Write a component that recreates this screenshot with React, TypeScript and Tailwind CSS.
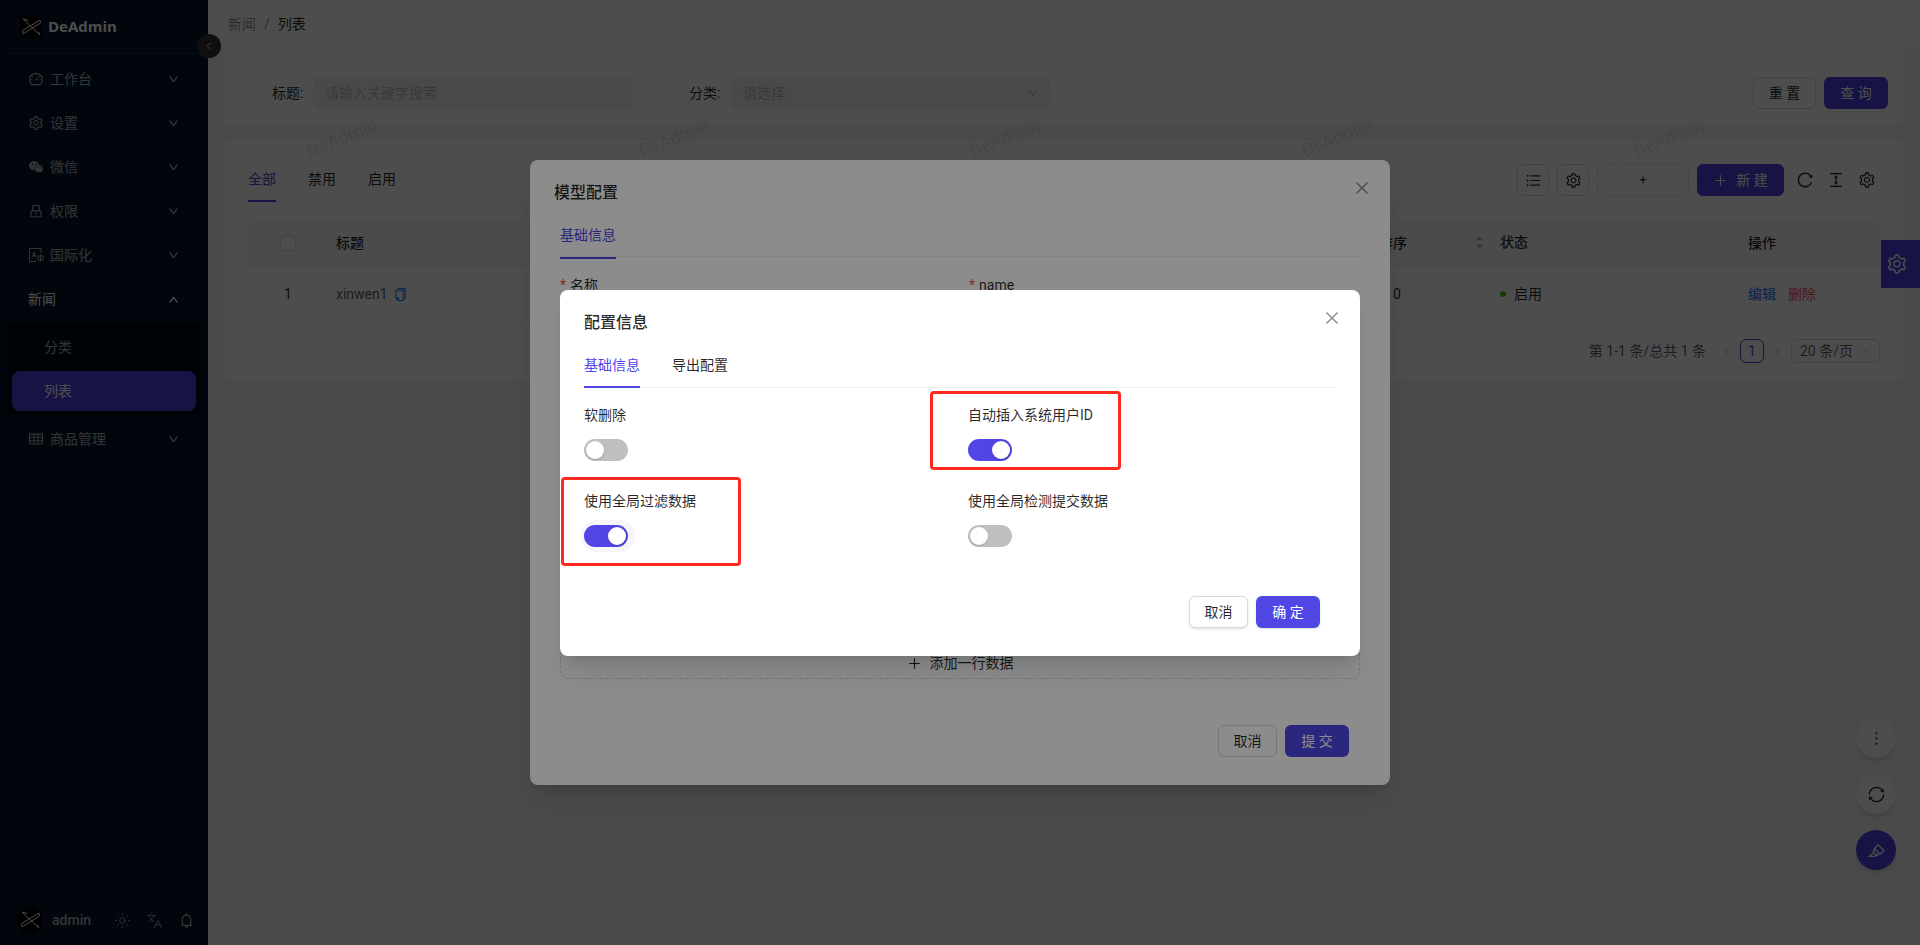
import React from "react";
import {
  AiOutlineDashboard,
  AiOutlineSetting,
  AiFillWechat,
  AiOutlineLock,
  AiOutlineTable,
  AiOutlineDown,
  AiOutlineUp,
  AiOutlineLeft,
  AiOutlineRight,
  AiOutlineClose,
  AiOutlinePlus,
  AiOutlineUnorderedList,
  AiOutlineReload,
  AiOutlineColumnHeight,
  AiOutlineCopy,
  AiOutlineMore,
  AiOutlineSync,
  AiOutlineHighlight,
  AiOutlineBell,
  AiFillCaretUp,
  AiFillCaretDown,
} from "react-icons/ai";
import { Sun, Languages } from "lucide-react";

const I18nIcon = () => (
  <svg width="16" height="16" viewBox="0 0 16 16" fill="none" stroke="currentColor" strokeWidth="1">
    <path d="M13 6V1.5H1.5v13H8" />
    <path d="M4 10.5 6 5l2 5.5M4.8 8.8h2.4" />
    <rect x="10" y="9" width="5" height="4" />
    <path d="M12.5 7.5v7" />
  </svg>
);

const Logo = ({ size = 22 }: { size?: number }) => (
  <svg width={size} height={size} viewBox="0 0 22 22" fill="none" stroke="currentColor" strokeWidth="1">
    <path d="M2.5 14.5 20 4l.5 3L3 18z" />
    <path d="M3 3l17 16M3 3l5.5 1.5M20 19l-1.5-3" />
  </svg>
);

const menu = [
  { label: "工作台", icon: <AiOutlineDashboard size={16} /> },
  { label: "设置", icon: <AiOutlineSetting size={16} /> },
  { label: "微信", icon: <AiFillWechat size={16} /> },
  { label: "权限", icon: <AiOutlineLock size={16} /> },
  { label: "国际化", icon: <I18nIcon /> },
];

const MenuRow = ({ label, icon, open }: { label: string; icon?: React.ReactNode; open?: boolean }) => (
  <div className={`mt-1 h-10 shrink-0 flex items-center pl-7 pr-[29px] text-sm ${open ? "text-white" : "text-white/65"}`}>
    {icon && <span className="w-[22px] flex items-center">{icon}</span>}
    <span className="flex-1">{label}</span>
    {open ? (
      <AiOutlineUp size={11} stroke="currentColor" strokeWidth={50} />
    ) : (
      <AiOutlineDown size={11} stroke="currentColor" strokeWidth={50} />
    )}
  </div>
);

const Sidebar = () => (
  <aside className="relative z-10 w-[208px] shrink-0 h-full bg-[#001529] flex flex-col">
    <div className="mx-2 h-[54px] shrink-0 border-b border-white/10 flex items-center pl-3 gap-1.5 text-white">
      <span className="bg-black w-[22px] h-[22px] flex items-center justify-center"><Logo /></span>
      <span className="text-[15px] font-bold leading-none font-['Open_Sans',sans-serif]">DeAdmin</span>
    </div>
    <div className="pt-[1px] flex flex-col">
      {menu.map((m) => (
        <MenuRow key={m.label} {...m} />
      ))}
      <MenuRow label="新闻" open />
    </div>
    <div className="mt-[3px] mx-2 h-[93px] shrink-0 bg-[#000c17] text-sm text-white/65 pt-[5px]">
      <div className="h-10 flex items-center pl-9">分类</div>
      <div className="mt-1 mx-1 h-10 rounded-lg bg-[#4f46e5] text-white flex items-center pl-8">列表</div>
    </div>
    <MenuRow label="商品管理" icon={<AiOutlineTable size={16} />} />
    <div className="mt-auto h-[38px] flex items-start pl-[17px] text-white/65">
      <span className="w-[26px] h-[26px] rounded-full bg-black flex items-center justify-center text-white"><Logo size={22} /></span>
      <span className="ml-[9px] text-sm font-medium leading-[26px] w-[47px]">admin</span>
      <span className="h-[26px] flex items-center gap-[15px] ml-[15px]">
        <Sun size={17} strokeWidth={1.2} />
        <Languages size={17} strokeWidth={1.2} />
        <AiOutlineBell size={17} />
      </span>
    </div>
    <button className="absolute left-[197px] top-[34px] w-6 h-6 rounded-full bg-[#333333] text-white/65 flex items-center justify-center">
      <AiOutlineLeft size={10} />
    </button>
  </aside>
);

const SearchBar = () => (
  <section className="h-[78px] mb-[15px] bg-white rounded-lg flex items-start pt-[30px] pl-12 pr-4 text-sm text-black/85">
    <span className="leading-8 w-[33px]">标题:</span>
    <div className="ml-2 w-[320px] h-8 rounded-md bg-black/[0.04] px-3 leading-8 text-black/25">请输入关键字搜索</div>
    <span className="ml-14 leading-8 w-[34px]">分类:</span>
    <div className="ml-2 w-[320px] h-8 rounded-md bg-black/[0.04] pl-3 pr-3 flex items-center justify-between text-black/25">
      请选择 <AiOutlineDown size={12} />
    </div>
    <div className="ml-auto flex gap-2">
      <button className="w-[63px] h-8 rounded-md border border-[#d9d9d9] bg-white">重 置</button>
      <button className="w-[64px] h-8 rounded-md bg-[#4f46e5] text-white">查 询</button>
    </div>
  </section>
);

const Toolbar = () => (
  <div className="h-[56px] flex items-start text-sm text-black/85">
    <div className="flex gap-8">
      <div className="h-[38px] flex items-start pt-[5px] text-[#4f46e5] border-b-2 border-[#4f46e5]">全部</div>
      <div className="pt-[5px]">禁用</div>
      <div className="pt-[5px]">启用</div>
    </div>
    <div className="ml-auto flex items-center gap-2 h-8 pr-1">
      <button className="w-8 h-8 rounded-md border border-[#d9d9d9] bg-white flex items-center justify-center"><AiOutlineUnorderedList size={17} /></button>
      <button className="w-8 h-8 rounded-md border border-[#d9d9d9] bg-white flex items-center justify-center"><AiOutlineSetting size={17} /></button>
      <button className="w-[92px] h-8 rounded-md border border-dashed border-[#d9d9d9] bg-white flex items-center justify-center text-xs">+</button>
      <button className="w-[87px] h-8 rounded-md bg-[#4f46e5] text-white flex items-center justify-center gap-2"><AiOutlinePlus size={15} /> 新 建</button>
      <span className="ml-1 flex items-center gap-[13px]">
        <AiOutlineReload size={18} />
        <AiOutlineColumnHeight size={18} />
        <AiOutlineSetting size={18} />
      </span>
    </div>
  </div>
);

const Table = () => (
  <div className="text-sm text-black/85">
    <div className="h-[46px] bg-[#fafafa] rounded-t-lg border-b border-[#f0f0f0] flex items-center font-medium">
      <div className="w-[80px] flex justify-center">
        <span className="w-4 h-4 rounded border border-[#d9d9d9] bg-white" />
      </div>
      <div className="w-[1051px] pl-2">标题</div>
      <div className="w-[113px] flex items-center justify-between pr-2 border-r border-[#f0f0f0] h-[22px]">
        排序
        <span className="flex flex-col text-black/30 -mr-[1px]">
          <AiFillCaretUp size={9} className="-mb-[1px]" />
          <AiFillCaretDown size={9} />
        </span>
      </div>
      <div className="w-[248px] pl-2 border-r border-[#f0f0f0] h-[22px]">状态</div>
      <div className="flex-1 pl-2">操作</div>
    </div>
    <div className="h-[57px] border-b border-[#f0f0f0] flex items-center">
      <div className="w-[80px] text-center">1</div>
      <div className="w-[1051px] pl-2 flex items-center gap-[5px] text-black/65">
        xinwen1 <AiOutlineCopy size={15} className="text-[#1677ff]" />
      </div>
      <div className="w-[113px] pl-[14px]">0</div>
      <div className="w-[248px] pl-2 flex items-center gap-2">
        <span className="w-1.5 h-1.5 rounded-full bg-[#52c41a]" /> 启用
      </div>
      <div className="flex-1 pl-2 flex gap-3">
        <span className="text-[#1677ff]">编辑</span>
        <span className="text-[#ff4d4f]">删除</span>
      </div>
    </div>
  </div>
);

const Pagination = () => (
  <div className="mt-4 h-6 flex items-center justify-end text-sm text-black/65">
    <span>第 1-1 条/总共 1 条</span>
    <AiOutlineLeft size={10} className="ml-4 text-black/25" />
    <span className="ml-2 w-6 h-6 rounded-md border border-[#4f46e5] text-[#4f46e5] text-center leading-[22px]">1</span>
    <AiOutlineRight size={10} className="ml-2 text-black/25" />
    <span className="ml-[9px] w-[89px] h-6 rounded-md border border-[#d9d9d9] pl-2 pr-2 flex items-center justify-between">
      20 条/页 <AiOutlineDown size={10} className="text-black/25" />
    </span>
  </div>
);

const Main = () => (
  <main className="flex-1 min-w-0 h-full bg-[#f7f7f7] flex flex-col">
    <header className="h-[47px] shrink-0 bg-white flex items-center pl-5 text-sm text-black/45">
      新闻<span className="mx-2">/</span><span className="text-black/85">列表</span>
    </header>
    <div className="px-4">
      <SearchBar />
      <section className="h-[240px] bg-white rounded-lg px-6 pt-6">
        <Toolbar />
        <Table />
        <Pagination />
      </section>
    </div>
  </main>
);

const wmTop = [311, 643, 974, 1306, 1638];

const Watermarks = () => (
  <div className="absolute left-0 top-0 w-full h-[412px] overflow-hidden pointer-events-none z-10">
    {wmTop.map((x) => (
      <span key={x} style={{ left: x - 6 }} className="absolute top-[128px] text-lg text-black/10 -rotate-[22deg] leading-5">DeAdmin</span>
    ))}
    <span className="absolute left-[309px] top-[416px] text-lg text-black/10 -rotate-[22deg] leading-5">DeAdmin</span>
    <span className="absolute left-[1636px] top-[416px] text-lg text-black/10 -rotate-[22deg] leading-5">DeAdmin</span>
  </div>
);

const Floats = () => (
  <>
    <div className="absolute right-0 top-[240px] w-[39px] h-12 bg-[#4f46e5] text-white flex items-center justify-center pr-2 z-10">
      <AiOutlineSetting size={22} />
    </div>
    <div className="absolute left-[1856px] top-[718px] flex flex-col gap-4 z-10">
      <span className="w-10 h-10 rounded-full bg-white shadow-md text-black/85 flex items-center justify-center"><AiOutlineMore size={19} /></span>
      <span className="w-10 h-10 rounded-full bg-white shadow-md text-black/85 flex items-center justify-center"><AiOutlineSync size={19} /></span>
      <span className="w-10 h-10 rounded-full bg-[#4f46e5] shadow-md text-white flex items-center justify-center"><AiOutlineHighlight size={19} /></span>
    </div>
  </>
);

const OuterModal = () => (
  <div className="absolute z-30 left-[530px] top-[160px] w-[860px] h-[625px] bg-white rounded-lg shadow-xl flex flex-col">
    <div className="pl-[24px] pr-[19px] pt-[21px] flex items-center justify-between">
      <span className="text-base font-medium leading-6 text-black/85">模型配置</span>
      <AiOutlineClose size={18} className="text-black/45 -mt-[10px]" />
    </div>
    <div className="mx-[30px] mt-[18px] h-[34px] border-b border-[#f0f0f0]">
      <span className="inline-block h-[34px] text-sm text-[#4f46e5] border-b-2 border-[#4f46e5]">基础信息</span>
    </div>
    <div className="mx-[30px] mt-[17px] grid grid-cols-[409px_1fr] text-sm text-black/85 leading-[22px]">
      <span><span className="text-[#ff4d4f] mr-1">*</span>名称</span>
      <span><span className="text-[#ff4d4f] mr-1">*</span>name</span>
    </div>
    <div className="mx-[30px] mt-[351px] h-8 rounded-lg border border-dashed border-[#d9d9d9] flex items-center justify-center gap-2 text-sm text-black/85">
      <AiOutlinePlus size={15} /> 添加一行数据
    </div>
    <div className="mt-[46px] pr-[41px] flex justify-end gap-2 text-sm">
      <button className="w-[59px] h-8 rounded-md border border-[#d9d9d9] bg-white text-black/85">取消</button>
      <button className="w-[64px] h-8 rounded-md bg-[#4f46e5] text-white">提 交</button>
    </div>
  </div>
);

const Switch = ({ on, halo }: { on?: boolean; halo?: boolean }) => (
  <span
    className={`block w-[44px] h-[22px] rounded-full p-[2px] ${on ? "bg-[#4f46e5] flex justify-end" : "bg-[#bfbfbf]"} ${
      halo ? "shadow-[2px_0_0_5px_#f5f5fa]" : ""
    }`}
  >
    <span className="block w-[18px] h-[18px] rounded-full bg-white shadow-sm" />
  </span>
);

const Field = ({ label, on, halo }: { label: string; on?: boolean; halo?: boolean }) => (
  <div className="h-[86px] pt-[16px]">
    <div className="text-sm leading-[22px] text-black/85 mb-[13px]">{label}</div>
    <Switch on={on} halo={halo} />
  </div>
);

const InnerModal = () => (
  <div className="absolute z-50 left-[560px] top-[290px] w-[800px] h-[366px] bg-white rounded-lg shadow-xl">
    <div className="pl-6 pr-[19px] pt-[21px] flex items-start justify-between">
      <span className="text-base font-medium leading-6 text-black/85">配置信息</span>
      <AiOutlineClose size={18} className="text-black/45 -mt-[2px]" />
    </div>
    <div className="mx-6 mt-[18px] h-[35px] border-b border-[#f0f0f0] flex gap-8 text-sm text-black/85 pt-[2px]">
      <span className="h-[33px] text-[#4f46e5] border-b-2 border-[#4f46e5]">基础信息</span>
      <span>导出配置</span>
    </div>
    <div className="mx-6 grid grid-cols-[384px_1fr]">
      <Field label="软删除" />
      <Field label="自动插入系统用户ID" on />
      <Field label="使用全局过滤数据" on halo />
      <Field label="使用全局检测提交数据" />
    </div>
    <div className="mt-[36px] pr-10 flex justify-end gap-2 text-sm">
      <button className="w-[59px] h-8 rounded-md border border-[#d9d9d9] bg-white text-black/85 shadow-sm">取消</button>
      <button className="w-[64px] h-8 rounded-md bg-[#4f46e5] text-white shadow-sm">确 定</button>
    </div>
  </div>
);

export default function App() {
  return (
    <div className="relative w-full h-[945px] overflow-hidden flex font-['Roboto','Noto_Sans_CJK_SC',sans-serif]">
      <Sidebar />
      <Main />
      <Watermarks />
      <Floats />
      <div className="absolute z-20 inset-0 bg-black/45" />
      <OuterModal />
      <div className="absolute z-40 inset-0 bg-black/45" />
      <InnerModal />
      <div className="absolute z-50 left-[930px] top-[391px] w-[191px] h-[79px] border-[3px] border-[#ff2a1f] rounded-sm" />
      <div className="absolute z-50 left-[561px] top-[477px] w-[180px] h-[89px] border-[3px] border-[#ff2a1f] rounded-sm" />
    </div>
  );
}
